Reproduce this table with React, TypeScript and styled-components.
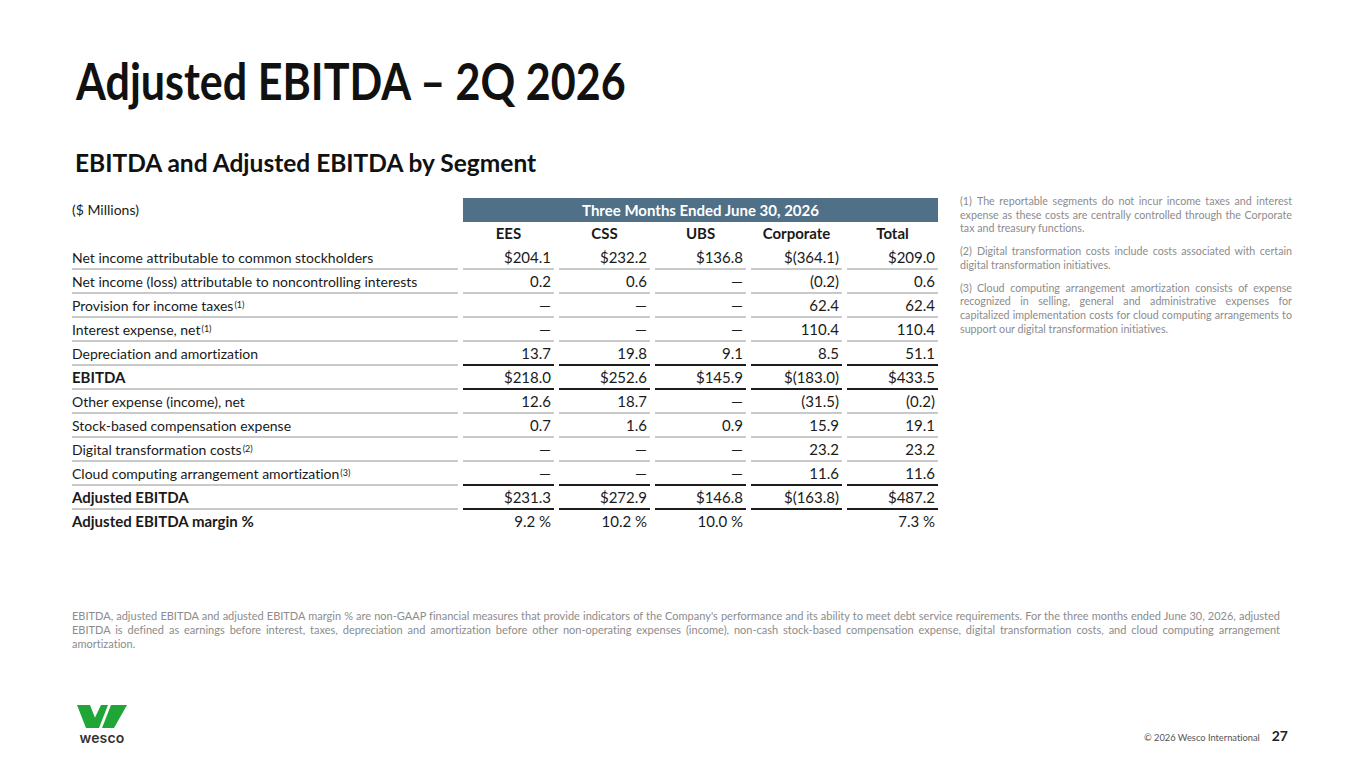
import React from "react";
import styled, { createGlobalStyle } from "styled-components";

const Global = createGlobalStyle`
  html, body { margin: 0; padding: 0; background: #ffffff; }
  body {
    font-family: "Lato", "Noto Sans", sans-serif;
    color: #1a1a1a;
    font-variant-ligatures: none;
    font-feature-settings: "liga" 0;
  }
  * { box-sizing: border-box; }
`;

const Page = styled.div`
  width: 1365px;
  height: 768px;
  padding: 0 72px 24px 72px;
  display: flex;
  flex-direction: column;
  overflow: hidden;
`;

const Title = styled.h1`
  margin: 50px 0 0 4px;
  font-family: "Lato", sans-serif;
  font-weight: 700;
  font-size: 52px;
  line-height: 60px;
  color: #111111;
  white-space: nowrap;
  transform: scaleX(0.828);
  transform-origin: left center;
`;

const Subtitle = styled.h2`
  margin: 38px 0 0 3px;
  font-family: "Lato", sans-serif;
  font-weight: 700;
  font-size: 24.5px;
  line-height: 30px;
  color: #111111;
`;

const Content = styled.div`
  display: flex;
  align-items: flex-start;
  margin-top: 16px;
`;

const Table = styled.div`
  display: grid;
  grid-template-columns: 386px repeat(5, 91px);
  column-gap: 5px;
  margin-top: 4px;
  font-size: 14px;
`;

type Line = "none" | "thin" | "thick";

const Cell = styled.div<{ $line?: Line; $align?: "left" | "right" | "center"; $bold?: boolean }>`
  height: 24px;
  display: flex;
  align-items: center;
  justify-content: ${(p) =>
    p.$align === "right" ? "flex-end" : p.$align === "center" ? "center" : "flex-start"};
  padding: ${(p) => (p.$align === "right" ? "0 3px 0 0" : "0")};
  font-weight: ${(p) => (p.$bold ? 700 : 400)};
  font-size: ${(p) => (p.$bold || p.$align === "right" ? "15px" : "14px")};
  white-space: nowrap;
  color: #1a1a1a;
  border-bottom: ${(p) =>
    p.$line === "thick"
      ? "2px solid #1c1c1c"
      : p.$line === "thin"
      ? "2px solid #c9c9c9"
      : "2px solid transparent"};
`;

const HeaderBar = styled.div`
  grid-column: 2 / span 5;
  height: 24px;
  background: #4f7087;
  color: #ffffff;
  font-weight: 700;
  font-size: 15px;
  display: flex;
  align-items: center;
  justify-content: center;
`;

const Sup = styled.sup`
  font-size: 9px;
  line-height: 0;
  vertical-align: 6px;
  margin-left: 1px;
  font-weight: 400;
`;

const Notes = styled.div`
  width: 332px;
  margin-left: 22px;
  display: flex;
  flex-direction: column;
  gap: 9px;
`;

const Note = styled.p`
  margin: 0;
  font-size: 10.7px;
  line-height: 13.7px;
  color: #8c8c8c;
  text-align: justify;
`;

const NoteNum = styled.span`
  margin-right: 5px;
`;

const Disclaimer = styled.p`
  margin: 75px 0 0 0;
  width: 1208px;
  font-size: 11px;
  line-height: 14px;
  color: #8c8c8c;
  text-align: justify;
`;

const Footer = styled.div`
  margin-top: auto;
  display: flex;
  align-items: flex-end;
  justify-content: space-between;
`;

const Logo = styled.div`
  margin-left: 5px;
  display: flex;
  flex-direction: column;
  align-items: center;
  width: 50px;
`;

const LogoWord = styled.div`
  font-family: "Inter", "Lato", sans-serif;
  font-weight: 600;
  font-size: 14px;
  line-height: 13px;
  color: #333333;
  margin-top: 3px;
  letter-spacing: 0.2px;
`;

const FootRight = styled.div`
  display: flex;
  align-items: baseline;
  gap: 12px;
  margin-right: 5px;
`;

const Copy = styled.span`
  font-size: 9.3px;
  color: #555555;
`;

const PageNum = styled.span`
  font-size: 14px;
  font-weight: 700;
  color: #222222;
`;

type Row = {
  label: React.ReactNode;
  vals: string[];
  bold?: boolean;
  thick?: boolean;
  last?: boolean;
};

const rows: Row[] = [
  { label: "Net income attributable to common stockholders", vals: ["$204.1", "$232.2", "$136.8", "$(364.1)", "$209.0"] },
  { label: "Net income (loss) attributable to noncontrolling interests", vals: ["0.2", "0.6", "—", "(0.2)", "0.6"] },
  { label: <>Provision for income taxes<Sup>(1)</Sup></>, vals: ["—", "—", "—", "62.4", "62.4"] },
  { label: <>Interest expense, net<Sup>(1)</Sup></>, vals: ["—", "—", "—", "110.4", "110.4"] },
  { label: "Depreciation and amortization", vals: ["13.7", "19.8", "9.1", "8.5", "51.1"], thick: true },
  { label: "EBITDA", vals: ["$218.0", "$252.6", "$145.9", "$(183.0)", "$433.5"], bold: true, thick: true },
  { label: "Other expense (income), net", vals: ["12.6", "18.7", "—", "(31.5)", "(0.2)"] },
  { label: "Stock-based compensation expense", vals: ["0.7", "1.6", "0.9", "15.9", "19.1"] },
  { label: <>Digital transformation costs<Sup>(2)</Sup></>, vals: ["—", "—", "—", "23.2", "23.2"] },
  { label: <>Cloud computing arrangement amortization<Sup>(3)</Sup></>, vals: ["—", "—", "—", "11.6", "11.6"], thick: true },
  { label: "Adjusted EBITDA", vals: ["$231.3", "$272.9", "$146.8", "$(163.8)", "$487.2"], bold: true, thick: true },
  { label: "Adjusted EBITDA margin %", vals: ["9.2 %", "10.2 %", "10.0 %", "", "7.3 %"], bold: true, last: true },
];

const heads = ["EES", "CSS", "UBS", "Corporate", "Total"];

const WescoMark = () => (
  <svg width="50" height="23" viewBox="0 0 50 23">
    <polygon points="0,0 13,0 22,23 9,23" fill="#1fa637" />
    <polygon points="13,23 24,0 31,0 22,23" fill="#1fa637" />
    <polygon points="34,0 50,0 37,23 25,23" fill="#1fa637" />
  </svg>
);

export default function App() {
  return (
    <Page>
      <Global />
      <Title>Adjusted EBITDA – 2Q 2026</Title>
      <Subtitle>EBITDA and Adjusted EBITDA by Segment</Subtitle>
      <Content>
        <Table>
          <Cell $align="left">($ Millions)</Cell>
          <HeaderBar>Three Months Ended June 30, 2026</HeaderBar>
          <Cell />
          {heads.map((h) => (
            <Cell key={h} $align="center" $bold>
              {h}
            </Cell>
          ))}
          {rows.map((r, i) => (
            <React.Fragment key={i}>
              <Cell $align="left" $bold={r.bold} $line={r.last ? "none" : "thin"}>
                {r.label}
              </Cell>
              {r.vals.map((v, j) => (
                <Cell key={j} $align="right" $line={r.last ? "none" : r.thick ? "thick" : "thin"}>
                  {v}
                </Cell>
              ))}
            </React.Fragment>
          ))}
        </Table>
        <Notes>
          <Note>
            <NoteNum>(1)</NoteNum>The reportable segments do not incur income taxes and interest expense as these costs are
            centrally controlled through the Corporate tax and treasury functions.
          </Note>
          <Note>
            <NoteNum>(2)</NoteNum>Digital transformation costs include costs associated with certain digital transformation
            initiatives.
          </Note>
          <Note>
            <NoteNum>(3)</NoteNum>Cloud computing arrangement amortization consists of expense recognized in selling, general
            and administrative expenses for capitalized implementation costs for cloud computing arrangements to support our
            digital transformation initiatives.
          </Note>
        </Notes>
      </Content>
      <Disclaimer>
        EBITDA, adjusted EBITDA and adjusted EBITDA margin % are non-GAAP financial measures that provide indicators of the
        Company's performance and its ability to meet debt service requirements. For the three months ended June 30, 2026,
        adjusted EBITDA is defined as earnings before interest, taxes, depreciation and amortization before other
        non-operating expenses (income), non-cash stock-based compensation expense, digital transformation costs, and cloud
        computing arrangement amortization.
      </Disclaimer>
      <Footer>
        <Logo>
          <WescoMark />
          <LogoWord>wesco</LogoWord>
        </Logo>
        <FootRight>
          <Copy>© 2026 Wesco International</Copy>
          <PageNum>27</PageNum>
        </FootRight>
      </Footer>
    </Page>
  );
}
